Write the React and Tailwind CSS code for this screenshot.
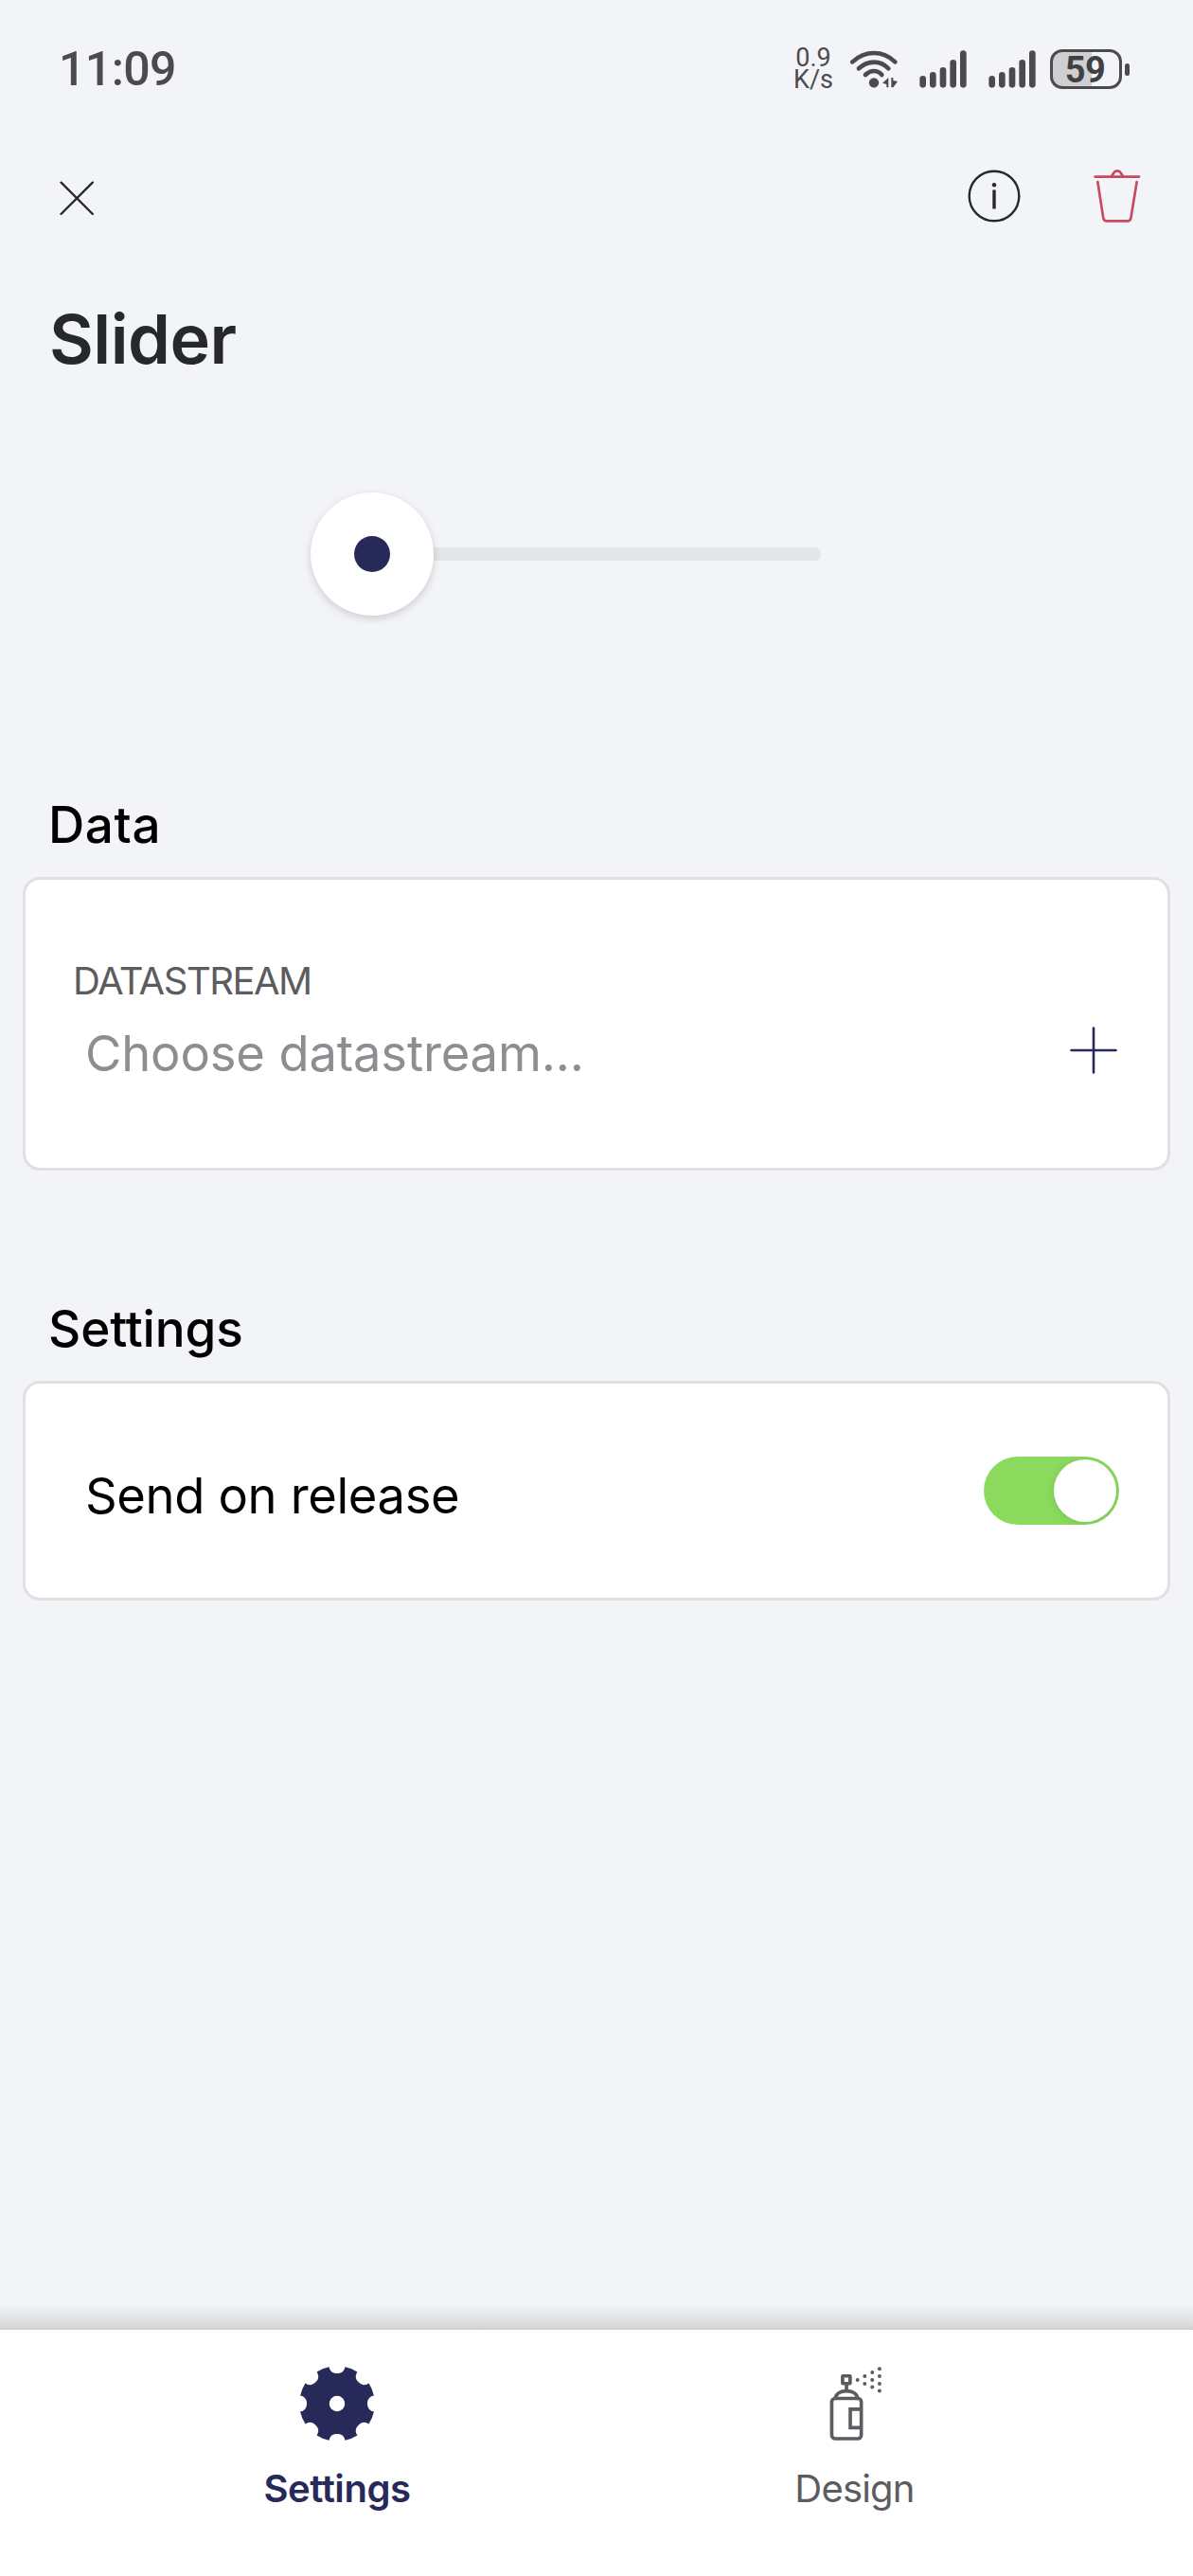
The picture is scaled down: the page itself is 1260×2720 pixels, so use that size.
import React from "react";

const CloseIcon = () => (
  <svg className="mt-[3px] h-9 w-9" viewBox="190 511 108 108" fill="none" stroke="#27282d" strokeWidth="7" strokeLinecap="round">
    <path d="M194.500 516 294.500 616M294.500 516 194.500 616" />
  </svg>
);

const InfoIcon = () => (
  <svg className="h-14 w-14" viewBox="0 0 56 56">
    <circle cx="28" cy="28" r="26.300" fill="none" stroke="#27282d" strokeWidth="2.400" />
    <circle cx="28" cy="16.300" r="2.200" fill="#27282d" />
    <path d="M28 21.500V41.500" stroke="#27282d" strokeWidth="3.400" />
  </svg>
);

const TrashIcon = () => (
  <svg className="h-14 w-[50px]" viewBox="524 87 150 168" fill="none" stroke="#c64a60" strokeWidth="8" strokeLinecap="round" strokeLinejoin="round">
    <path d="M529 110H668" />
    <path d="M581 108 590 95Q592 92 595 92H603Q606 92 608 95L617 108" />
    <path d="M537 126 555 242Q557 250 565 250H632Q640 250 642 242L661 126" />
  </svg>
);

const WifiIcon = () => (
  <svg className="h-[42px] w-[50px]" viewBox="233 63 150 126" fill="none" stroke="#4b4b4d" strokeWidth="14" strokeLinecap="round">
    <path d="M240 103Q270 75 308 75T375 103" />
    <path d="M260 124Q282 104 308 104T354 124" />
    <path d="M281 144Q293 132 308 132T333 144" />
    <circle cx="308" cy="169" r="15.500" fill="#4b4b4d" stroke="none" />
    <path d="M335 170 354 153V184H348V174ZM363 153H369V162L383 165 369 184H363Z" fill="#4b4b4d" stroke="none" />
  </svg>
);

const SignalIcon = () => (
  <svg className="h-[42px] w-[50px]" viewBox="452 63 150 126" stroke="#4b4b4d" strokeWidth="20" strokeLinecap="round">
    <path d="M463 157V175M495 145V175M527 130V175M559 106V175M591 77V175" />
  </svg>
);

const Battery = () => (
  <div className="flex items-center gap-[3px]">
    <div className="flex h-[42px] w-[76px] items-center justify-center rounded-[13px] border-[3px] border-[#4b4b4d] bg-[linear-gradient(to_right,#cfcfd1_59%,transparent_59%)] pt-[2px] pr-[2px] font-['Roboto',sans-serif] text-[38px] leading-none font-bold tracking-[-0.5px] text-[#404042]">
      59
    </div>
    <div className="h-[13px] w-[5px] rounded-full bg-[#4b4b4d]" />
  </div>
);

const PlusIcon = () => (
  <svg className="h-[50px] w-[50px]" viewBox="0 0 50 50" stroke="#272959" strokeWidth="2.600" strokeLinecap="round">
    <path d="M25 1.500V48.500M1.500 25H48.500" />
  </svg>
);

const notches = [0, 45, 90, 135, 180, 225, 270, 315];

const GearIcon = () => (
  <svg className="h-20 w-20" viewBox="-40 -40 80 80">
    <circle r="39.800" fill="#272959" />
    <g fill="#fff">
      <circle r="8.200" />
      {notches.map((a) => (
        <path key={a} transform={`rotate(${a})`} d="M-9 -41 -8.300 -38C-7 -33.500 -4 -32 0 -32S7 -33.500 8.300 -38L9 -41Z" />
      ))}
    </g>
  </svg>
);

const sprayDots = [
  [315, 278], [338, 266], [338, 290], [362, 254], [362, 278], [362, 301],
  [385, 243], [385, 266], [385, 290], [385, 313],
];

const SprayIcon = () => (
  <svg className="h-[78px] w-[56px]" viewBox="226 236 168 235" fill="none" stroke="#5c5c60" strokeWidth="11">
    <rect x="267.500" y="265.500" width="24" height="24" rx="1" />
    <path d="M280 293V312" />
    <path d="M244 337C247 321 262 313 280 313S313 321 316 337" />
    <rect x="233" y="337" width="94" height="128" rx="11" />
    <path d="M327 371H292V430H327" />
    <g fill="#5c5c60" stroke="none">
      {sprayDots.map(([x, y]) => (
        <circle key={`${x}-${y}`} cx={x} cy={y} r="6" />
      ))}
    </g>
  </svg>
);

const StatusBar = () => (
  <div className="flex h-[146px] items-center justify-between pr-[67px] pl-[62px] text-[#4b4b4d]">
    <span className="font-['Roboto',sans-serif] text-[50px] leading-none font-medium tracking-[-0.6px]">11:09</span>
    <div className="flex h-[42px] items-center">
      <div className="mr-[18px] flex flex-col items-center font-['Roboto',sans-serif] text-[27px] leading-[23px]">
        <span>0.9</span>
        <span>K/s</span>
      </div>
      <WifiIcon />
      <div className="ml-[23px] flex gap-[23px]">
        <SignalIcon />
        <SignalIcon />
      </div>
      <div className="ml-[15px]">
        <Battery />
      </div>
    </div>
  </div>
);

const SliderControl = () => (
  <div className="mr-[393px] ml-[328px] flex h-[274px] items-center">
    <div className="z-10 flex h-[130px] w-[130px] shrink-0 items-center justify-center rounded-full bg-white shadow-[0_3px_8px_rgba(0,0,0,0.16)]">
      <div className="h-[38px] w-[38px] rounded-full bg-[#272959]" />
    </div>
    <div className="-ml-2 h-[14px] flex-1 rounded-r-[7px] bg-[#e4e5e9]" />
  </div>
);

const Toggle = () => (
  <div className="flex h-[72px] w-[143px] items-center justify-end overflow-hidden rounded-full bg-[#8bda5e] pr-[3px]">
    <div className="h-[66px] w-[66px] rounded-full bg-white shadow-[0_1px_8px_rgba(0,0,0,0.12)]" />
  </div>
);

export default function App() {
  return (
    <div className="flex h-[2720px] w-[1260px] flex-col overflow-hidden bg-[#f3f4f8] font-['Inter',sans-serif] text-black">
      <StatusBar />
      <header className="flex h-[122px] items-center justify-between pr-[55px] pl-[63px]">
        <CloseIcon />
        <div className="flex items-center gap-[77.5px]">
          <InfoIcon />
          <TrashIcon />
        </div>
      </header>
      <h1 className="pl-[52px] text-[72px] leading-[180px] font-semibold tracking-[-0.5px] text-[#27282d]">Slider</h1>
      <SliderControl />

      <h2 className="mt-[93px] pt-px pl-[51px] text-[53px] leading-[110px] font-medium tracking-[0.6px]">Data</h2>
      <section className="mx-6 flex h-[310px] items-center justify-between rounded-[18px] border-[3px] border-[#e0e0e4] bg-white pr-[53px] pl-[50px]">
        <div className="pb-[15px]">
          <div className="text-[40px] leading-[76px] font-normal tracking-[-1.5px] text-[#5c5c60]">DATASTREAM</div>
          <div className="pl-[13px] text-[52.500px] leading-[76px] font-normal tracking-[-0.15px] text-[#8e8e92]">Choose datastream...</div>
        </div>
        <div className="pt-[56px]">
          <PlusIcon />
        </div>
      </section>

      <h2 className="mt-[111px] pt-px pl-[51px] text-[53px] leading-[110px] font-medium tracking-[-0.1px]">Settings</h2>
      <section className="mx-6 flex h-[232px] items-center justify-between rounded-[18px] border-[3px] border-[#e0e0e2] bg-white pr-[51px] pl-[63px]">
        <span className="pt-[10px] text-[52.500px] leading-[76px] font-normal tracking-[-0.35px]">Send on release</span>
        <Toggle />
      </section>

      <div className="mt-auto h-7 bg-[linear-gradient(to_bottom,#f3f4f8,#e5e6e8_50%,#d9dadc_85%,#cfcfd3)]" />
      <nav className="flex h-[260px] bg-white px-[82px]">
        <div className="flex w-[548px] flex-col items-center pt-[38px]">
          <GearIcon />
          <span className="mt-[20px] text-[40px] leading-[60px] font-semibold tracking-[-0.45px] text-[#272959]">Settings</span>
        </div>
        <div className="flex w-[548px] flex-col items-center pt-[39px]">
          <SprayIcon />
          <span className="mt-[21px] mr-[3px] text-[40px] leading-[60px] font-normal tracking-[-0.8px] text-[#5c5c60]">Design</span>
        </div>
      </nav>
    </div>
  );
}
